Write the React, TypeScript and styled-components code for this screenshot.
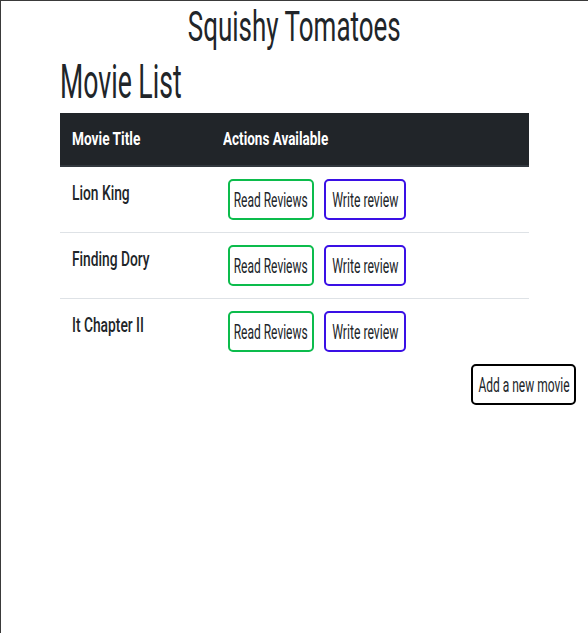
import React from 'react';
import styled, { createGlobalStyle } from 'styled-components';

const Global = createGlobalStyle`
  html, body { margin: 0; padding: 0; background: #fff; }
  body { font-family: Roboto, "Liberation Sans", sans-serif; color: #212529; }
  * { box-sizing: border-box; }
`;

const Frame = styled.div`
  min-height: 100vh;
  border-top: 1px solid #3a3a3a;
  border-left: 1px solid #3a3a3a;
`;

const Squeeze = styled.span<{ $k: number; $origin?: string }>`
  display: inline-block;
  white-space: nowrap;
  transform: scaleX(${p => p.$k});
  transform-origin: ${p => p.$origin ?? 'left'} center;
`;

const SiteTitle = styled.h1`
  margin: 0;
  text-align: center;
  font-size: 43px;
  font-weight: 400;
  line-height: 1.2;
`;

const Main = styled.main`
  width: 469px;
  margin: 0 auto;
`;

const PageHeading = styled.h2`
  margin: 0 0 3px;
  font-size: 48px;
  font-weight: 400;
  line-height: 1.2;
`;

const Table = styled.table`
  width: 100%;
  border-collapse: separate;
  border-spacing: 0;
`;

const Th = styled.th<{ $w?: number }>`
  background: #212529;
  color: #fff;
  text-align: left;
  padding: 12px;
  font-size: 19px;
  font-weight: 700;
  line-height: 28px;
  border-bottom: 2px solid #32383e;
  width: ${p => (p.$w ? `${p.$w}px` : 'auto')};
`;

const Td = styled.td<{ $last?: boolean }>`
  padding: 12px;
  vertical-align: top;
  font-size: 20px;
  font-weight: 500;
  line-height: 28px;
  border-bottom: ${p => (p.$last ? 'none' : '1px solid #dee2e6')};
`;

const Actions = styled.div`
  display: flex;
  gap: 10px;
  margin-left: 5px;
`;

const Button = styled.button<{ $color: string; $w: number }>`
  display: flex;
  align-items: center;
  justify-content: center;
  width: ${p => p.$w}px;
  height: 41px;
  padding: 0;
  background: #fff;
  border: 2px solid ${p => p.$color};
  border-radius: 5px;
  color: #212529;
  font-family: inherit;
  font-size: 20px;
  font-weight: 400;
  overflow: visible;
  cursor: pointer;
`;

const Footer = styled.div`
  display: flex;
  justify-content: flex-end;
  padding-right: 12px;
`;

const movies = ['Lion King', 'Finding Dory', 'It Chapter II'];

export default function App() {
  return (
    <>
      <Global />
      <Frame>
        <SiteTitle>
          <Squeeze $k={0.604} $origin="center">Squishy Tomatoes</Squeeze>
        </SiteTitle>
        <Main>
          <PageHeading>
            <Squeeze $k={0.555}>Movie List</Squeeze>
          </PageHeading>
          <Table>
            <thead>
              <tr>
                <Th $w={151}>
                  <Squeeze $k={0.72}>Movie Title</Squeeze>
                </Th>
                <Th>
                  <Squeeze $k={0.71}>Actions Available</Squeeze>
                </Th>
              </tr>
            </thead>
            <tbody>
              {movies.map((m, i) => (
                <tr key={m}>
                  <Td $last={i === movies.length - 1}>
                    <Squeeze $k={0.69}>{m}</Squeeze>
                  </Td>
                  <Td $last={i === movies.length - 1}>
                    <Actions>
                      <Button $color="#0cbc4c" $w={86}>
                        <Squeeze $k={0.6} $origin="center">Read Reviews</Squeeze>
                      </Button>
                      <Button $color="#3a10e5" $w={82}>
                        <Squeeze $k={0.61} $origin="center">Write review</Squeeze>
                      </Button>
                    </Actions>
                  </Td>
                </tr>
              ))}
            </tbody>
          </Table>
        </Main>
        <Footer>
          <Button $color="#000" $w={105}>
            <Squeeze $k={0.6} $origin="center">Add a new movie</Squeeze>
          </Button>
        </Footer>
      </Frame>
    </>
  );
}
